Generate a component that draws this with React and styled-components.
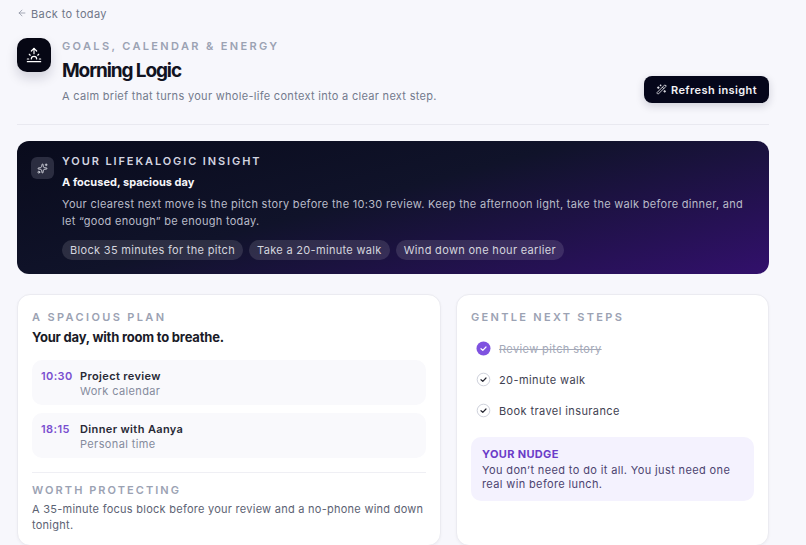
import React from "react";
import styled, { createGlobalStyle } from "styled-components";
import { ArrowLeft, Sunrise, WandSparkles, Sparkles } from "lucide-react";

const Global = createGlobalStyle`
  html, body { margin: 0; padding: 0; background: #f7f7fc; height: 545px; overflow: hidden; }
  body { font-family: Inter, "Liberation Sans", sans-serif; }
  * { box-sizing: border-box; }
`;
const Page = styled.div`
  width: 752px;
  margin-left: 17px;
  padding-top: 6px;
  display: flex;
  flex-direction: column;
`;
const Back = styled.div`
  display: flex; align-items: center; gap: 4px;
  height: 15px;
  font-size: 11px; letter-spacing: 0.38px; color: #6f7688;
  svg { margin-top: -2px; }
`;
const Header = styled.header`
  display: flex; justify-content: space-between; align-items: flex-end;
  margin-top: 17px;
  padding-bottom: 19px;
  border-bottom: 1px solid #e9e9f0;
`;
const HeaderLeft = styled.div`display: flex; gap: 11px; align-items: flex-start;`;
const LogoBox = styled.div`
  width: 34px; height: 34px; border-radius: 10px; background: #060714;
  display: flex; align-items: center; justify-content: center;
  box-shadow: 0 6px 12px rgba(20,20,50,0.16);
`;
const HeaderText = styled.div`padding-top: 1px;`;
const Eyebrow = styled.div`
  font-size: 11px; font-weight: 600; letter-spacing: ${p => p.$ls || 2.36}px; line-height: 14px;
  color: #9ba2b3;
`;
const Title = styled.h1`
  margin: 6px 0 0; font-size: 19px; line-height: 24px; font-weight: 700; letter-spacing: -1.1px; color: #12131f;
`;
const Sub = styled.p`
  margin: 4px 0 0; font-size: 11px; line-height: 18px; letter-spacing: 0.3px; color: #737a8c;
`;
const Refresh = styled.button`
  display: flex; align-items: center; gap: 4px; height: 27px; width: 125px; padding: 0 0 0 12px;
  background: #05061a; color: #f2f2f6; border: 0; border-radius: 8px;
  font: 600 11px Inter, sans-serif; letter-spacing: 0.4px;
  box-shadow: 0 3px 8px rgba(20,20,50,0.18);
  margin-bottom: 2px;
`;
const Insight = styled.section`
  height: 133px; margin-top: 16px; border-radius: 12px;
  padding: 13px 14px; display: flex; gap: 8px;
  background: linear-gradient(165deg, #090b1c 0%, #10132a 45%, #32106c 100%);
`;
const SparkBox = styled.div`
  width: 23px; height: 22px; border-radius: 6px; background: #2b2d40; flex: none; margin-top: 3px;
  display: flex; align-items: center; justify-content: center;
`;
const InsightBody = styled.div`flex: 1; min-width: 0;`;
const InsightLabel = styled.div`
  font-size: 11px; font-weight: 600; letter-spacing: 1.9px; line-height: 14px; color: #d3d5e0;
`;
const InsightHead = styled.div`
  margin-top: 7px; font-size: 11px; line-height: 14px; font-weight: 700; letter-spacing: 0.03px; color: #f6f6fa;
`;
const InsightText = styled.p`
  margin: 7px 0 0; font-size: 11px; line-height: 17px; letter-spacing: 0.3px; color: #b9bbc8;
`;
const Chips = styled.div`display: flex; gap: 6px; margin-top: 10px;`;
const Chip = styled.span`
  height: 20px; padding: 0 8px; border-radius: 10px; background: rgba(255,255,255,0.12); color: #d4d5de;
  font-size: 11px; letter-spacing: 0.32px; line-height: 20px; white-space: nowrap;
`;
const Columns = styled.div`
  display: grid; grid-template-columns: 424px 313px; gap: 15px; margin-top: 20px;
`;
const Card = styled.section`
  background: #fff; border: 1px solid #ebebf1; border-radius: 13px; height: 252px; padding: 15px 14px;
  box-shadow: 0 1px 3px rgba(20,20,50,0.04);
`;
const CardTitle = styled.h2`
  margin: 5px 0 0; font-size: 13px; line-height: 16px; font-weight: 700; letter-spacing: -0.2px; color: #191a27;
`;
const Plans = styled.div`display: flex; flex-direction: column; gap: 8px; margin-top: 15px;`;
const Plan = styled.div`
  display: flex; gap: 7px; height: 45px; padding: 9px; border-radius: 10px; background: #f9f9fc;
`;
const PlanTime = styled.div`
  width: 32px; font-size: 11px; line-height: 15px; font-weight: 600; letter-spacing: 0.4px; color: #7a4fd0;
`;
const PlanName = styled.div`font-size: 11px; line-height: 15px; font-weight: 600; letter-spacing: 0.37px; color: #282936;`;
const PlanSub = styled.div`font-size: 11px; line-height: 15px; letter-spacing: 0.37px; color: #858b9c;`;
const Rule = styled.div`height: 1px; background: #efeff4; margin: 14px 0 10px;`;
const Protect = styled.p`
  margin: 4px 0 0; font-size: 11px; line-height: 16px; letter-spacing: 0.26px; color: #5c6273;
`;
const Steps = styled.div`display: flex; flex-direction: column; gap: 10px; margin-top: 14px; padding-left: 5px;`;
const Step = styled.div`
  display: flex; align-items: center; gap: 8px; height: 21px; font-size: 11px; letter-spacing: 0.4px;
  color: ${p => (p.$done ? "#a4a9b8" : "#3f4252")};
  text-decoration: ${p => (p.$done ? "line-through" : "none")};
`;
const Nudge = styled.div`
  margin-top: 16px; height: 64px; border-radius: 10px; background: #f4f2fe; padding: 10px 11px;
`;
const NudgeLabel = styled.div`
  font-size: 11px; line-height: 14px; font-weight: 700; letter-spacing: 0.35px; color: #6a3cc8;
`;
const NudgeText = styled.div`
  margin-top: 2px; font-size: 11px; line-height: 14px; letter-spacing: 0.37px; color: #4c4470;
`;

const Check = ({ done }) => (
  <svg width="15" height="15" viewBox="0 0 15 15" style={{ flex: "none" }}>
    <circle cx="7.5" cy="7.5" r={done ? 7 : 6.3} fill={done ? "#7f52e0" : "#fff"} stroke={done ? "none" : "#cfd2dc"} strokeWidth="1" />
    <path d="M5 7.7l1.8 1.7L10 6" fill="none" stroke={done ? "#fff" : "#23242f"} strokeWidth="1.2" strokeLinecap="round" strokeLinejoin="round" />
  </svg>
);

export default function App() {
  return (
    <Page>
      <Global />
      <Back>
        <ArrowLeft size={10} color="#8a90a0" strokeWidth={1.8} />
        Back to today
      </Back>
      <Header>
        <HeaderLeft>
          <LogoBox>
            <Sunrise size={16} color="#fff" strokeWidth={1.8} />
          </LogoBox>
          <HeaderText>
            <Eyebrow>GOALS, CALENDAR &amp; ENERGY</Eyebrow>
            <Title>Morning Logic</Title>
            <Sub>A calm brief that turns your whole-life context into a clear next step.</Sub>
          </HeaderText>
        </HeaderLeft>
        <Refresh>
          <WandSparkles size={11} color="#f2f2f6" strokeWidth={1.8} />
          Refresh insight
        </Refresh>
      </Header>
      <Insight>
        <SparkBox>
          <Sparkles size={11} color="#e3e4ec" strokeWidth={1.8} />
        </SparkBox>
        <InsightBody>
          <InsightLabel>YOUR LIFEKALOGIC INSIGHT</InsightLabel>
          <InsightHead>A focused, spacious day</InsightHead>
          <InsightText>Your clearest next move is the pitch story before the 10:30 review. Keep the afternoon light, take the walk before dinner, and let “good enough” be enough today.</InsightText>
          <Chips>
            <Chip>Block 35 minutes for the pitch</Chip>
            <Chip>Take a 20-minute walk</Chip>
            <Chip>Wind down one hour earlier</Chip>
          </Chips>
        </InsightBody>
      </Insight>
      <Columns>
        <Card>
          <Eyebrow>A SPACIOUS PLAN</Eyebrow>
          <CardTitle>Your day, with room to breathe.</CardTitle>
          <Plans>
            <Plan>
              <PlanTime>10:30</PlanTime>
              <div><PlanName>Project review</PlanName><PlanSub>Work calendar</PlanSub></div>
            </Plan>
            <Plan>
              <PlanTime>18:15</PlanTime>
              <div><PlanName>Dinner with Aanya</PlanName><PlanSub>Personal time</PlanSub></div>
            </Plan>
          </Plans>
          <Rule />
          <Eyebrow $ls={2.05}>WORTH PROTECTING</Eyebrow>
          <Protect>A 35-minute focus block before your review and a no-phone wind down tonight.</Protect>
        </Card>
        <Card>
          <Eyebrow $ls={2.3}>GENTLE NEXT STEPS</Eyebrow>
          <Steps>
            <Step $done><Check done />Review pitch story</Step>
            <Step><Check />20-minute walk</Step>
            <Step><Check />Book travel insurance</Step>
          </Steps>
          <Nudge>
            <NudgeLabel>YOUR NUDGE</NudgeLabel>
            <NudgeText>You don’t need to do it all. You just need one real win before lunch.</NudgeText>
          </Nudge>
        </Card>
      </Columns>
    </Page>
  );
}
